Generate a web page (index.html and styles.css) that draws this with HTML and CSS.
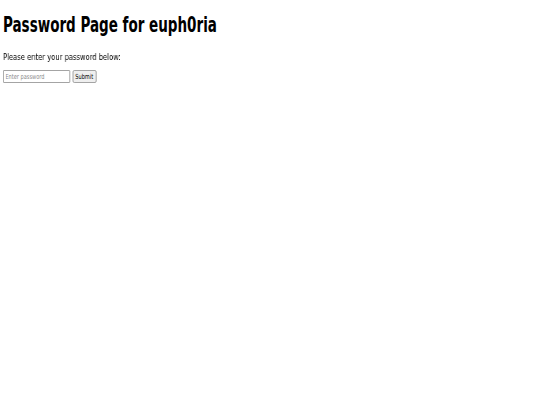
FILE: index.html
```html
<!DOCTYPE html>
<html lang="en">
<head>
<meta charset="utf-8">
<title>Password Page for euph0ria</title>
<link rel="stylesheet" href="styles.css">
</head>
<body>
<main class="page">
  <h1 class="title">Password Page for euph0ria</h1>
  <p class="prompt">Please enter your password below:</p>
  <form class="pw-form">
    <input class="pw-input" type="password" placeholder="Enter password">
    <button class="pw-submit" type="submit">Submit</button>
  </form>
</main>
</body>
</html>
```

FILE: styles.css
```css
html, body {
  margin: 0;
  padding: 0;
  background: #ffffff;
}

.page {
  padding: 0 3px;
  font-family: "DejaVu Sans Condensed", "DejaVu Sans", sans-serif;
  color: #000000;
}

.title {
  margin: 13px 0 0;
  font-size: 20.5px;
  line-height: 24px;
  font-weight: bold;
  white-space: nowrap;
  transform: scaleX(0.732);
  transform-origin: 0 0;
}

.prompt {
  margin: 13.5px 0 0;
  font-size: 9.5px;
  line-height: 12px;
  white-space: nowrap;
  color: #000000;
  transform: scaleX(0.79);
  transform-origin: 0 0;
  will-change: transform;
}

.pw-form {
  margin-top: 7.5px;
  display: flex;
  align-items: center;
  gap: 2.5px;
  transform: scaleX(0.8);
  transform-origin: 0 0;
}

.pw-input {
  box-sizing: border-box;
  width: 84px;
  height: 13px;
  margin: 0;
  padding: 0 2px;
  border: 1px solid #9a9a9a;
  border-radius: 1px;
  font-family: inherit;
  font-size: 7px;
  background: #ffffff;
}

.pw-input::placeholder {
  color: #8a8a8a;
}

.pw-submit {
  box-sizing: border-box;
  width: 30px;
  height: 13px;
  margin: 0;
  padding: 0;
  border: 1px solid #9a9a9a;
  border-radius: 2px;
  background: #efefef;
  font-family: inherit;
  font-size: 7px;
  color: #000000;
}
```
